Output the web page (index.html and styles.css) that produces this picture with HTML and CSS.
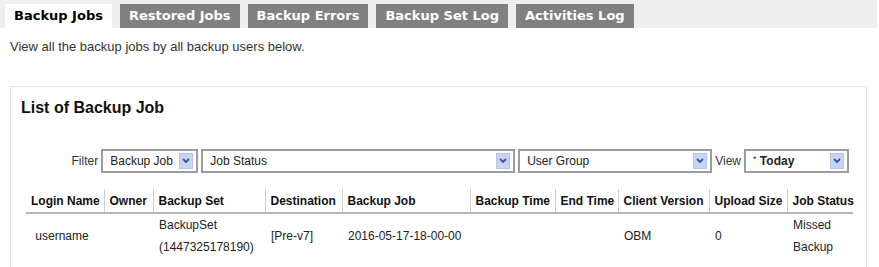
FILE: index.html
```html
<!DOCTYPE html>
<html>
<head>
<meta charset="utf-8">
<link rel="stylesheet" href="styles.css">
</head>
<body>
<div class="tabbar">
  <div class="tab active">Backup Jobs</div>
  <div class="tab">Restored Jobs</div>
  <div class="tab">Backup Errors</div>
  <div class="tab">Backup Set Log</div>
  <div class="tab">Activities Log</div>
</div>
<div class="desc">View all the backup jobs by all backup users below.</div>
<div class="panel">
  <div class="title">List of Backup Job</div>
  <div class="filters">
    <span class="label">Filter</span>
    <div class="sel w1"><span class="val">Backup Job</span><span class="arrow"><svg width="8" height="6" viewBox="0 0 8 6"><path d="M1 1 L4 4 L7 1" fill="none" stroke="#3b5687" stroke-width="1.8"/></svg></span></div>
    <div class="sel w2"><span class="val">Job Status</span><span class="arrow"><svg width="8" height="6" viewBox="0 0 8 6"><path d="M1 1 L4 4 L7 1" fill="none" stroke="#3b5687" stroke-width="1.8"/></svg></span></div>
    <div class="sel w3"><span class="val">User Group</span><span class="arrow"><svg width="8" height="6" viewBox="0 0 8 6"><path d="M1 1 L4 4 L7 1" fill="none" stroke="#3b5687" stroke-width="1.8"/></svg></span></div>
    <span class="label">View</span>
    <div class="sel w4"><span class="val"><span class="star">*</span> <b>Today</b></span><span class="arrow"><svg width="8" height="6" viewBox="0 0 8 6"><path d="M1 1 L4 4 L7 1" fill="none" stroke="#3b5687" stroke-width="1.8"/></svg></span></div>
  </div>
  <table class="jobs">
    <colgroup>
      <col class="c1"><col class="c2"><col class="c3"><col class="c4"><col class="c5">
      <col class="c6"><col class="c7"><col class="c8"><col class="c9"><col class="c10">
    </colgroup>
    <thead>
      <tr>
        <th>Login Name</th><th>Owner</th><th>Backup Set</th><th>Destination</th><th>Backup Job</th>
        <th>Backup Time</th><th>End Time</th><th>Client Version</th><th>Upload Size</th><th>Job Status</th>
      </tr>
    </thead>
    <tbody>
      <tr>
        <td>&nbsp;username</td><td></td><td>BackupSet<br>(1447325178190)</td><td>[Pre-v7]</td><td>2016-05-17-18-00-00</td>
        <td></td><td></td><td>OBM</td><td>0</td><td>Missed<br>Backup</td>
      </tr>
    </tbody>
  </table>
</div>
</body>
</html>
```
FILE: styles.css
```css
body {
  margin: 0;
  font-family: "Liberation Sans", Arial, sans-serif;
  color: #222;
  background: #fff;
}
.tabbar {
  width: 877px;
  height: 28px;
  background: #eeeeee;
  display: flex;
  align-items: flex-end;
  gap: 8px;
  padding-left: 5px;
  box-sizing: border-box;
}
.tab {
  height: 24px;
  line-height: 24px;
  padding: 0 9px;
  background: #808080;
  color: #fff;
  font-family: "DejaVu Sans", Verdana, sans-serif;
  font-weight: bold;
  font-size: 13px;
}
.tab.active {
  background: #fff;
  color: #000;
}
.desc {
  margin: 11px 0 0 10px;
  font-size: 13px;
  line-height: 16px;
  color: #333;
}
.panel {
  margin: 31px 0 0 10px;
  width: 857px;
  height: 181px;
  box-sizing: border-box;
  border: 1px solid #e6e6e6;
  border-bottom: 0;
}
.title {
  padding: 11px 0 0 10px;
  font-size: 16px;
  line-height: 20px;
  font-weight: bold;
  color: #111;
}
.filters {
  margin-top: 31px;
  display: flex;
  justify-content: flex-end;
  align-items: center;
  gap: 3px;
  padding-right: 17px;
  font-size: 12px;
}
.label {
  color: #333;
}
.sel {
  height: 24px;
  box-sizing: border-box;
  border: 2px solid #9c9c9c;
  display: flex;
  align-items: center;
  padding-left: 7px;
  background: #fff;
  color: #222;
}
.val {
  flex: 1;
  white-space: nowrap;
}
.star {
  font-size: 9px;
  vertical-align: 3px;
}
.arrow {
  width: 14px;
  height: 16px;
  margin-right: 3px;
  box-sizing: border-box;
  background: #c6d5f6;
  border: 1px solid #b3c5ee;
  display: flex;
  align-items: center;
  justify-content: center;
}
.w1 { width: 97px; }
.w2 { width: 314px; }
.w3 { width: 194px; }
.w4 { width: 105px; }
.jobs {
  margin: 16px 0 0 15px;
  width: 827px;
  table-layout: fixed;
  border-collapse: collapse;
  font-size: 12px;
}
.c1 { width: 78px; }
.c2 { width: 49px; }
.c3 { width: 112px; }
.c4 { width: 77px; }
.c5 { width: 128px; }
.c6 { width: 85px; }
.c7 { width: 63px; }
.c8 { width: 91px; }
.c9 { width: 78px; }
.c10 { width: 66px; }
.jobs th {
  height: 23px;
  padding: 0 5px;
  text-align: left;
  font-weight: bold;
  color: #111;
  border-bottom: 2px solid #b5b5b5;
  white-space: nowrap;
}
.jobs th + th {
  border-left: 1px solid #cfcfcf;
}
.jobs td {
  padding: 0 6px;
  line-height: 22px;
  vertical-align: middle;
  color: #222;
}
```
